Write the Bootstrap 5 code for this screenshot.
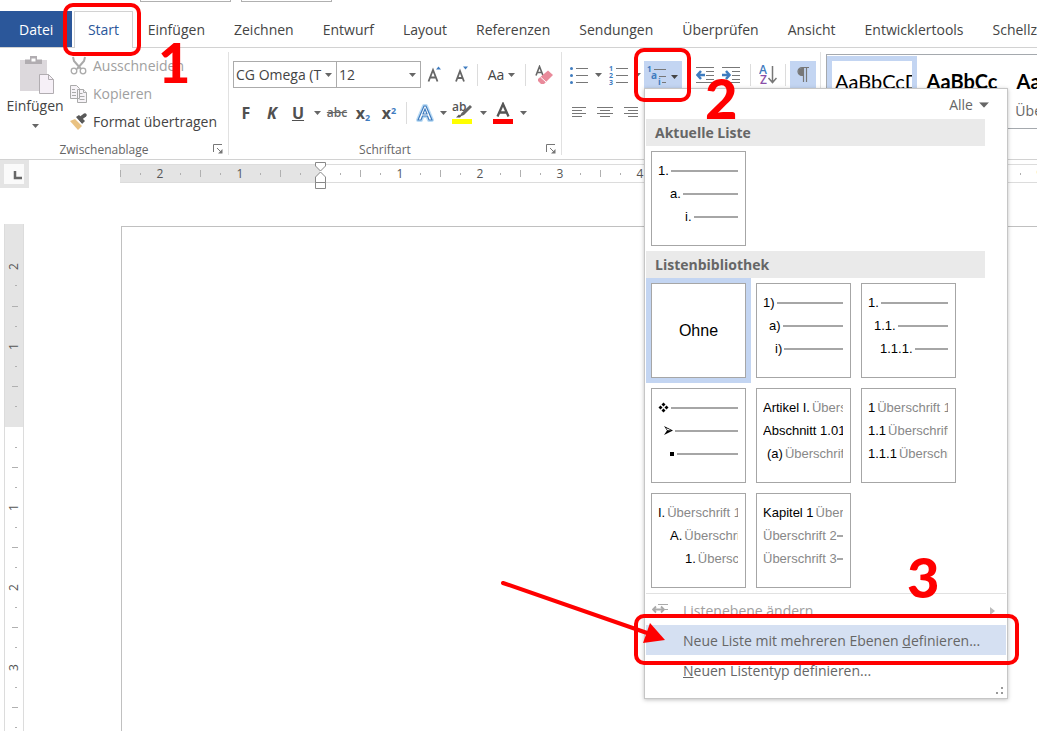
<!DOCTYPE html>
<html lang="de">
<head>
<meta charset="utf-8">
<meta name="viewport" content="width=device-width, initial-scale=1">
<title>Liste mit mehreren Ebenen</title>
<link href="https://cdn.jsdelivr.net/npm/bootstrap@5.3.0/dist/css/bootstrap.min.css" rel="stylesheet">
<style>
:root { --line: #d2d2d2; --hi: #c3d5f2; --ink: #444; --blue: #2b579a; --grey: #a6a6a6; }
body { font-family: "Open Sans", "Noto Sans", sans-serif; font-size: 14px; line-height: 20px; color: var(--ink); background: #fff; }
button { font: inherit; color: inherit; background: none; border: 0; padding: 0; }
.app { overflow: hidden; }
.stub { width: 91px; height: 2px; border: 1px solid #b0b0b0; border-top: 0; }
.stubs { height: 11px; padding-left: 140px; gap: 10px; }
.tabs { height: 37px; border-bottom: 1px solid var(--line); }
.tabs a { color: var(--ink); text-decoration: none; margin-left: 29px; line-height: 37px; white-space: nowrap; }
.tabs a.file { background: var(--blue); color: #fff; width: 73px; margin: 0; text-align: center; height: 36px; }
.tabs a.start { color: var(--blue); width: 59px; margin: 0 -14px 0 2px; text-align: center; border: 1px solid var(--line); border-bottom: 0; background: #fff; height: 37px; line-height: 36px; }
.ribbon { height: 112px; padding: 4px 0; border-bottom: 1px solid var(--line); }
.group { border-right: 1px solid #e1e1e1; }
.g-clip { width: 229px; } .g-font { width: 333px; } .g-para { width: 259px; }
.caption { font-size: 12px; line-height: 14px; height: 12px; color: #666; }
.launch { width: 20px; line-height: 0; }
.paste { width: 70px; padding-top: 4px; }
.cmd { height: 28px; gap: 5px; white-space: nowrap; }
.off { color: #a0a0a0; }
.tools { padding: 9px 0 0 4px; }
.bar { height: 27px; margin-bottom: 11px; }
.bar button { height: 27px; display: flex; align-items: center; justify-content: center; flex: none; }
.w8 { width: 8px; } .w13 { width: 13px; } .w26 { width: 26px; } .w28 { width: 28px; } .w32 { width: 32px; } .w38 { width: 38px; } .w43 { width: 43px; }
.sep { width: 1px; height: 22px; background: #dcdcdc; margin: 0 4px; }
.sep2 { margin: 0 2px; }
.pressed { background: var(--hi) !important; }
.pick { height: 27px; min-height: 0; border: 1px solid #ababab; border-radius: 0; padding: 0 14px 0 2px; font-size: 14px; color: var(--ink); background-size: 7px 4px; background-position: right 4px center; text-overflow: clip;
  background-image: url("data:image/svg+xml,%3Csvg xmlns='http://www.w3.org/2000/svg' viewBox='0 0 7 4'%3E%3Cpath d='M0 0h7L3.5 4z' fill='%23666'/%3E%3C/svg%3E"); }
.pick-font { width: 104px; } .pick-size { width: 84px; border-left: 0; }
.glyph { font-weight: 700; font-size: 16px; color: #505050; }
.glyph sub, .glyph sup { font-size: 9px; color: #3f7cbf; }
.strike { text-decoration: line-through; font-size: 12px; font-weight: 600; color: #666; }
.gallery { margin: 2px 0 0 5px; height: 75px; border: 1px solid #a5a9ae; border-right: 0; padding-top: 1px; overflow: hidden; }
.style-item { width: 90px; height: 71px; flex: none; display: flex; flex-direction: column; align-items: center; font-family: Lato, "Open Sans", sans-serif; font-size: 20px; line-height: 40px; color: #000; border: 5px solid transparent !important; overflow: hidden; white-space: nowrap; }
.style-item small { font: 14px/20px "Open Sans", sans-serif; color: #666; }
.style-item.on { border-color: var(--hi) !important; align-items: flex-start; padding-left: 3px; }
.style-item.on::first-line { line-height: 40px; }
.corner { width: 29px; height: 28px; background: #fafafa; border: 4px solid #e4e4e4 !important; border-right-width: 5px !important; flex: none; }
.hruler { margin: 4px 0 0 90px; padding-left: 1px; height: 19px; font-size: 12px; line-height: 19px; color: #555; }
.hruler span { flex: none; height: 19px; border: solid #dcdcdc; border-width: 1px 0; line-height: 17px; text-align: center; }
.unit { width: 80px; background: linear-gradient(#b0b0b0,#b0b0b0) 0 50%/1px 7px, linear-gradient(#b0b0b0,#b0b0b0) 20px 50%/1px 2px, linear-gradient(#b0b0b0,#b0b0b0) 60px 50%/1px 2px; background-repeat: no-repeat; }
.half { width: 40px; background: linear-gradient(#b0b0b0,#b0b0b0) 20px 50%/1px 2px no-repeat; }
.half.first { background: linear-gradient(#b0b0b0,#b0b0b0) 0 50%/1px 7px, linear-gradient(#b0b0b0,#b0b0b0) 20px 50%/1px 2px; background-repeat: no-repeat; }
.marker { left: 195px; top: -3px; }
.desk { margin-top: 36px; }
.vruler { width: 20px; margin-left: 4px; font-size: 12px; color: #555; flex: none; overflow: hidden; }
.vruler span { flex: none; border: solid #dcdcdc; border-width: 0 1px; display: flex; align-items: center; justify-content: center; }
.vruler i { font-style: normal; writing-mode: vertical-rl; transform: rotate(180deg); line-height: 18px; }
.vunit { height: 80px; background: linear-gradient(#b0b0b0,#b0b0b0) 60% 0/6px 1px, linear-gradient(#b0b0b0,#b0b0b0) 60% 20px/2px 1px, linear-gradient(#b0b0b0,#b0b0b0) 60% 60px/2px 1px; background-repeat: no-repeat; }
.vunit.top { height: 82px; padding-top: 3px; background: linear-gradient(#b0b0b0,#b0b0b0) 60% 61px/2px 1px no-repeat; }
.vhalf { height: 40px; background: linear-gradient(#b0b0b0,#b0b0b0) 60% 20px/2px 1px no-repeat; }
.vhalf.first { height: 41px; background: linear-gradient(#b0b0b0,#b0b0b0) 60% 0/6px 1px, linear-gradient(#b0b0b0,#b0b0b0) 60% 20px/2px 1px; background-repeat: no-repeat; }
.hruler span.dark, .vruler span.dark { background-color: #e4e4e4; }
.sheet { margin: 2px 0 0 97px; border: solid #c0c0c0; border-width: 1px 0 0 1px; }
.flyout { left: 644px; top: 88px; width: 364px; border: 1px solid #c6c6c6; background: #fff; box-shadow: 0 1px 4px rgba(0,0,0,.25); padding: 0 1px; color: #666; z-index: 2; }
.all { height: 30px; padding: 2px 17px 0 0; gap: 6px; }
.flyout h2 { font-size: 14px; line-height: 27px; font-weight: 700; width: 339px; padding-left: 9px; background: #eaeaea; margin: 0; color: #666; }
.tiles { width: 339px; }
.tile { width: 105px; height: 105px; border: 5px solid transparent !important; text-align: left; }
.tile.on { border-color: var(--hi) !important; background: #fff; }
.face { height: 95px; border: 1px solid var(--grey); padding: 7px 7px 0 6px; font: 13px/23px "Liberation Sans", Arial, sans-serif; color: #000; }
.face.none { padding: 0; font-size: 16px; line-height: 93px; text-align: center; }
.lv { display: flex; align-items: center; overflow: hidden; white-space: nowrap; height: 23px; gap: 2px; }
.lv::after { content: ""; flex: 1 1 auto; height: 2px; background: var(--grey); }
.lv span { color: #888; }
.in1 { padding-left: 6px; } .in2 { padding-left: 12px; } .in4 { padding-left: 27px; }
.entries { border-top: 1px solid #e1e1e1; padding: 1px 0 13px; }
.entries button { height: 30px; width: 100%; display: flex; align-items: center; text-align: left; padding: 2px 11px 0 6px; white-space: nowrap; }
.entries svg.entry-icon { width: 31px; flex: none; margin-bottom: 4px; }
.entries .blank { padding-left: 37px; }
.entries .hot { background: #d5e0f2; }
.grip { right: 4px; bottom: 3px; }
.ring { border: 4px solid #f00; border-radius: 10px; z-index: 3; pointer-events: none; }
.ring1 { left: 63px; top: 3px; width: 78px; height: 53px; }
.ring2 { left: 634px; top: 48px; width: 57px; height: 54px; }
.ring3 { left: 634px; top: 614px; width: 385px; height: 51px; }
.num { font: 900 56px/56px Lato, sans-serif; color: #f00; z-index: 3; }
.num1 { left: 158px; top: 34px; } .num2 { left: 705px; top: 70px; } .num3 { left: 907px; top: 549px; }
.arrow { left: 498px; top: 578px; z-index: 4; }
</style>
<script src="https://cdn.jsdelivr.net/npm/bootstrap@5.3.0/dist/js/bootstrap.bundle.min.js"></script>
</head>
<body>
<svg class="d-none"><defs>
<symbol id="car" viewBox="0 0 7 4"><path d="M0 0h7L3.5 4z" fill="#666"/></symbol>
<symbol id="launch" viewBox="0 0 10 10"><path d="M.5 8V.5H9M4 4l5 5" fill="none" stroke="#777"/><path d="M9.500 5v4.500H5z" fill="#777"/></symbol>
</defs></svg>
<div class="app position-relative vh-100 d-flex flex-column">
  <div class="stubs d-flex align-items-start flex-shrink-0"><div class="stub"></div><div class="stub"></div></div>
  <nav class="tabs d-flex flex-shrink-0" aria-label="Menüband">
    <a class="file" href="#">Datei</a><a class="start" href="#">Start</a><a href="#">Einfügen</a><a href="#">Zeichnen</a><a href="#">Entwurf</a><a href="#">Layout</a><a href="#">Referenzen</a><a href="#">Sendungen</a><a href="#">Überprüfen</a><a href="#">Ansicht</a><a href="#">Entwicklertools</a><a href="#">Schellz</a>
  </nav>

  <div class="ribbon d-flex flex-shrink-0">
    <section class="group g-clip d-flex flex-column flex-shrink-0">
      <div class="d-flex flex-fill">
        <button class="paste d-flex flex-column align-items-center">
          <svg class="ms-1" width="36" height="40" viewBox="0 0 36 40"><path d="M1 4h27v31H1z" fill="#dcd8dc"/><path d="M6 8V3.500h5V0h7v3.500h5V8z" fill="#b1adb1"/><path d="M12.500 2.500h4v3h-4z" fill="#fff"/><path d="M20.500 18.500h9l5 5v14h-14z" fill="#f6f0f7" stroke="#b1adb1"/><path d="M29.500 18.500v5h5" fill="none" stroke="#b1adb1"/></svg>
          <span>Einfügen</span>
          <svg class="mt-2" width="7" height="4"><use href="#car"/></svg>
        </button>
        <div>
          <button class="cmd off d-flex align-items-center">
            <svg width="18" height="20" viewBox="0 0 18 20" fill="none" stroke="#aaa"><path d="M3 1l1 4 7 8M15 1l-1 4-7 8" stroke-width="2"/><circle cx="4" cy="15" r="2.800" stroke-width="1.300"/><circle cx="13" cy="15" r="2.800" stroke-width="1.300"/></svg>Ausschneiden</button>
          <button class="cmd off d-flex align-items-center">
            <svg width="18" height="20" viewBox="0 0 18 20" fill="#f6f3f7" stroke="#aaa"><path d="M.5 1.500h6l3 3v10h-9zM7.500 5.500h6l3 3v10h-9z"/><path d="M2 5.500h3M2 8.500h4M2 11.500h4M9.500 9.500h3M9.500 12.500h5M9.500 15.500h5M13.500 5.500v3h3"/></svg>Kopieren</button>
          <button class="cmd d-flex align-items-center">
            <svg width="18" height="20" viewBox="0 0 18 20"><path d="M0 9l5-2 7 7-4 4z" fill="#e9c282"/><path d="M6 5l3-2 6 6-3 3z" fill="#595959"/><path d="M11 6l4-3" stroke="#595959" stroke-width="3.500" stroke-linecap="round"/><path d="M5.500 6l7 7" stroke="#fff"/></svg>Format übertragen</button>
        </div>
      </div>
      <div class="caption d-flex"><span class="flex-fill text-center">Zwischenablage</span><button class="launch" aria-label="Zwischenablage-Optionen"><svg width="10" height="10"><use href="#launch"/></svg></button></div>
    </section>

    <section class="group g-font d-flex flex-column flex-shrink-0">
      <div class="tools flex-fill">
        <div class="bar d-flex align-items-center">
          <select class="form-select pick pick-font" aria-label="Schriftart"><option>CG Omega (T1)</option></select>
          <select class="form-select pick pick-size" aria-label="Schriftgrad"><option>12</option></select>
          <button class="w28" aria-label="Vergrößern"><svg width="16" height="20" viewBox="0 0 16 20"><path d="M1.500 16.500L6 5l4.500 11.500M3 12.500h6" fill="none" stroke="#666" stroke-width="1.800"/><path d="M9 4.500l2.500-3 2.500 3z" fill="#3f7cbf"/></svg></button>
          <button class="w26" aria-label="Verkleinern"><svg width="16" height="20" viewBox="0 0 16 20"><path d="M2 16.500L6 6l4 10.500M3.500 13h5" fill="none" stroke="#666" stroke-width="1.800"/><path d="M9 1.500l2.500 3 2.500-3z" fill="#3f7cbf"/></svg></button>
          <div class="sep sep2"></div>
          <button class="w43 gap-1">Aa<svg width="7" height="4"><use href="#car"/></svg></button>
          <div class="sep sep2"></div>
          <button class="w32" aria-label="Formatierung löschen"><svg width="20" height="20" viewBox="0 0 20 20"><path d="M2 10.500L5.500 1.500 9 10.500M3.500 7.500h4" fill="none" stroke="#666" stroke-width="1.600"/><path d="M4 14l10-8.500L19 10l-9 9H7l-3-3z" fill="#e98a9a"/><path d="M6.500 12l5.500 5" stroke="#fff"/></svg></button>
        </div>
        <div class="bar d-flex align-items-center">
          <button class="w26 glyph">F</button><button class="w26 glyph fst-italic">K</button><button class="w26 glyph text-decoration-underline">U</button>
          <button class="w13" aria-label="Unterstreichung"><svg width="7" height="4"><use href="#car"/></svg></button>
          <button class="w26 strike">abc</button>
          <button class="w26 glyph"><span>x<sub>2</sub></span></button><button class="w26 glyph"><span>x<sup>2</sup></span></button>
          <div class="sep"></div>
          <button class="w28" aria-label="Texteffekte"><svg width="20" height="22" viewBox="0 0 20 22"><path d="M3 18L9 4h2l6 14h-3l-1.500-4h-5L6 18z" fill="none" stroke="#bcdcf5" stroke-width="4" stroke-linejoin="round"/><path d="M3 18L9 4h2l6 14h-3l-1.500-4h-5L6 18zM8 12h4l-2-5z" fill="#fff" stroke="#3f7cbf" stroke-width="1.200"/></svg></button>
          <button class="w8" aria-label="Effekte"><svg width="7" height="4"><use href="#car"/></svg></button>
          <button class="w32" aria-label="Hervorheben"><svg width="22" height="22" viewBox="0 0 22 22"><text x="0" y="9" font-size="12" font-weight="600" fill="#555">ab</text><path d="M7 15l2.500-4L18 3l2 2-8 8z" fill="#666"/><path d="M4 15.500l3-3 2 2-1 1z" fill="#555"/><path d="M0 17h20v5H0z" fill="#ff0"/></svg></button>
          <button class="w8" aria-label="Farben"><svg width="7" height="4"><use href="#car"/></svg></button>
          <button class="w32" aria-label="Schriftfarbe"><svg width="20" height="22" viewBox="0 0 20 22"><path d="M4.500 14.500L10 2l5.500 12.500M6.500 10.500h7" fill="none" stroke="#555" stroke-width="2.300"/><path d="M0 17h20v5H0z" fill="#f00"/></svg></button>
          <button class="w8" aria-label="Schriftfarben"><svg width="7" height="4"><use href="#car"/></svg></button>
        </div>
      </div>
      <div class="caption d-flex"><span class="flex-fill text-center">Schriftart</span><button class="launch" aria-label="Schriftart-Optionen"><svg width="10" height="10"><use href="#launch"/></svg></button></div>
    </section>

    <section class="group g-para flex-shrink-0">
      <div class="tools">
        <div class="bar d-flex align-items-center">
          <button class="w26" aria-label="Aufzählung"><svg width="18" height="18" viewBox="0 0 18 18"><path d="M6 2.500h12M6 9.500h12M6 16.500h12" stroke="#777"/><g fill="#3f7cbf"><circle cx="1.500" cy="2.500" r="1.500"/><circle cx="1.500" cy="9.500" r="1.500"/><circle cx="1.500" cy="16.500" r="1.500"/></g></svg></button>
          <button class="w13" aria-label="Zeichen"><svg width="7" height="4"><use href="#car"/></svg></button>
          <button class="w26" aria-label="Nummerierung"><svg width="19" height="20" viewBox="0 0 19 20"><path d="M7 3.500h12M7 10.500h12M7 17.500h12" stroke="#777"/><g font-size="7" font-weight="700" fill="#3f7cbf"><text y="6">1</text><text y="13">2</text><text y="20">3</text></g></svg></button>
          <button class="w13" aria-label="Nummern"><svg width="7" height="4"><use href="#car"/></svg></button>
          <button class="w38 pressed" aria-label="Liste mit mehreren Ebenen"><svg width="32" height="22" viewBox="0 0 32 22"><path d="M7 5.500h12M12 12.500h7M15 18.500h4" stroke="#777"/><g font-weight="700" fill="#3f7cbf"><text x="0" y="8" font-size="8">1</text><text x="4" y="15" font-size="10">a</text><text x="11" y="21" font-size="9">i</text></g><path d="M24 11h7l-3.500 4z" fill="#444"/></svg></button>
          <button class="w26 ms-2" aria-label="Einzug verkleinern"><svg class="ms-1" width="18" height="18" viewBox="0 0 18 18"><path d="M0 1.500h18M10 5.500h8M10 9.500h8M10 13.500h8M0 16.500h18" stroke="#777"/><path d="M9 9H2M5 5L1.500 9 5 13" fill="none" stroke="#3f7cbf" stroke-width="2.500"/></svg></button>
          <button class="w26" aria-label="Einzug vergrößern"><svg class="ms-1" width="18" height="18" viewBox="0 0 18 18"><path d="M0 1.500h18M10 5.500h8M10 9.500h8M10 13.500h8M0 16.500h18" stroke="#777"/><path d="M0 9h7M4 5l3.500 4L4 13" fill="none" stroke="#3f7cbf" stroke-width="2.500"/></svg></button>
          <div class="sep ms-2"></div>
          <button class="w26" aria-label="Sortieren"><svg width="18" height="20" viewBox="0 0 18 20"><g font-size="12" font-weight="600"><text x="0" y="9" fill="#3f7cbf">A</text><text x="1" y="19" fill="#8a50a8">Z</text></g><path d="M13.500 1v16M9.500 13l4 4.500 4-4.500" fill="none" stroke="#777" stroke-width="1.500"/></svg></button>
          <div class="sep"></div>
          <button class="w26 pressed" aria-label="Alle anzeigen"><svg width="14" height="18" viewBox="0 0 14 18"><path d="M13 1.500H6a4 4 0 0 0 0 8h1.500V2M7.500 1.500V16M10.500 1.500V16" fill="none" stroke="#777" stroke-width="1.200"/><path d="M7 2H6a3.700 3.700 0 0 0 0 7.500h1z" fill="#777"/></svg></button>
        </div>
        <div class="bar d-flex align-items-center">
          <button class="w26" aria-label="Linksbündig"><svg width="16" height="12" viewBox="0 0 16 12"><path d="M1 .5h14M1 3.500h10M1 6.500h14M1 9.500h10" stroke="#777"/></svg></button>
          <button class="w26" aria-label="Zentriert"><svg width="16" height="12" viewBox="0 0 16 12"><path d="M0 .5h16M3 3.500h10M0 6.500h16M3 9.500h10" stroke="#777"/></svg></button>
          <button class="w26" aria-label="Rechtsbündig"><svg width="16" height="12" viewBox="0 0 16 12"><path d="M1 .5h14M5 3.500h10M1 6.500h14M5 9.500h10" stroke="#777"/></svg></button>
        </div>
      </div>
    </section>

    <div class="gallery d-flex flex-fill">
      <button class="style-item on">AaBbCcD</button>
      <button class="style-item fw-bold">AaBbCc</button>
      <button class="style-item fw-bold">AaBbCc<small>Überschrift</small></button>
    </div>
  </div>

  <div class="d-flex flex-shrink-0">
    <button class="corner" aria-label="Tabstopp"><svg class="d-block ms-auto mt-1" width="12" height="12" viewBox="0 0 12 12"><path d="M3 1v7h7" fill="none" stroke="#666" stroke-width="2.500"/></svg></button>
    <div class="hruler d-flex flex-fill position-relative">
      <span class="unit dark">2</span><span class="unit dark">1</span><span class="half first dark"></span><span class="half"></span><span class="unit">1</span><span class="unit">2</span><span class="unit">3</span><span class="unit">4</span><span class="unit">5</span><span class="unit">6</span><span class="unit">7</span><span class="unit">8</span><span class="unit">9</span>
      <svg class="marker position-absolute" width="14" height="30" viewBox="0 0 14 30" fill="#fff" stroke="#888"><path d="M1.500 1.500h10V5l-5 5-5-5zM1.500 21.500V16l5-5 5 5v5.500zM1.500 21.500h10v6h-10z"/></svg>
    </div>
  </div>

  <div class="desk d-flex flex-fill overflow-hidden">
    <div class="vruler d-flex flex-column">
      <span class="vunit top dark"><i>2</i></span><span class="vunit dark"><i>1</i></span><span class="vhalf first dark"></span><span class="vhalf"></span><span class="vunit"><i>1</i></span><span class="vunit"><i>2</i></span><span class="vunit"><i>3</i></span><span class="vunit"><i>4</i></span>
    </div>
    <main class="sheet flex-fill" aria-label="Dokument"></main>
  </div>

  <div class="flyout position-absolute">
    <button class="all d-flex align-items-center ms-auto">Alle<svg width="10" height="6" viewBox="0 0 7 4"><use href="#car"/></svg></button>
    <h2>Aktuelle Liste</h2>
    <div class="tiles d-flex flex-wrap">
      <button class="tile"><div class="face"><div class="lv">1.</div><div class="lv in2">a.</div><div class="lv in4">i.</div></div></button>
    </div>
    <h2>Listenbibliothek</h2>
    <div class="tiles d-flex flex-wrap">
      <button class="tile on"><div class="face none">Ohne</div></button>
      <button class="tile"><div class="face"><div class="lv">1)</div><div class="lv in1">a)</div><div class="lv in2">i)</div></div></button>
      <button class="tile"><div class="face"><div class="lv">1.</div><div class="lv in1">1.1.</div><div class="lv in2">1.1.1.</div></div></button>
      <button class="tile"><div class="face">
        <div class="lv"><svg width="11" height="11" viewBox="0 0 11 11"><path d="M5.500 .5l2 2-2 2-2-2zM5.500 6.500l2 2-2 2-2-2zM2.500 3.500l2 2-2 2-2-2zM8.500 3.500l2 2-2 2-2-2z"/></svg></div>
        <div class="lv in1"><svg width="9" height="9" viewBox="0 0 9 9"><path d="M0 0l9 4.500L0 9l3-4.500z"/><path d="M2 2l5 2.200H3.500z" fill="#fff"/></svg></div>
        <div class="lv in2"><svg width="5" height="4"><path d="M0 0h4v4H0z"/></svg></div></div></button>
      <button class="tile"><div class="face"><div class="lv">Artikel I. <span>Überschrift 1</span></div><div class="lv">Abschnitt 1.01 <span>Überschrift 2</span></div><div class="lv ps-1">(a)<span>Überschrift 3</span></div></div></button>
      <button class="tile"><div class="face"><div class="lv">1<span>Überschrift 1—</span></div><div class="lv">1.1<span>Überschrift 2—</span></div><div class="lv">1.1.1<span>Überschrift 3—</span></div></div></button>
      <button class="tile"><div class="face"><div class="lv">I.<span>Überschrift 1—</span></div><div class="lv in2">A.<span>Überschrift 2—</span></div><div class="lv in4">1.<span>Überschrift 3—</span></div></div></button>
      <button class="tile"><div class="face"><div class="lv">Kapitel 1<span>Überschrift 1</span></div><div class="lv gap-0"><span>Überschrift 2</span></div><div class="lv gap-0"><span>Überschrift 3</span></div></div></button>
    </div>
    <div class="entries">
      <button class="off" disabled><svg class="entry-icon" height="12" viewBox="0 0 31 12"><path d="M6 1.500h10M13 6.500h3" stroke="#aaa"/><path d="M2 6.500h9M4 3.500l-3 3 3 3M9 3.500l3 3-3 3" fill="none" stroke="#aaa" stroke-width="1.800"/></svg>Listenebene ändern<svg class="ms-auto" width="5" height="8"><path d="M0 0l5 4-5 4z" fill="#bbb"/></svg></button>
      <button class="hot blank"><span>Neue Liste mit mehreren Ebenen <u>d</u>efinieren...</span></button>
      <button class="blank"><span><u>N</u>euen Listentyp definieren...</span></button>
    </div>
    <svg class="grip position-absolute" width="8" height="8" fill="#999"><path d="M6 0h2v2H6zM6 5h2v2H6zM1 5h2v2H1z"/></svg>
  </div>

  <div class="ring ring1 position-absolute"></div>
  <div class="ring ring2 position-absolute"></div>
  <div class="ring ring3 position-absolute"></div>
  <span class="num num1 position-absolute">1</span>
  <span class="num num2 position-absolute">2</span>
  <span class="num num3 position-absolute">3</span>
  <svg class="arrow position-absolute" width="170" height="68" viewBox="0 0 170 68"><path d="M5 5l147 51" stroke="#f00" stroke-width="4" stroke-linecap="round"/><path d="M152 45l15 17-22 3z" fill="#f00"/></svg>
</div>
</body>
</html>
